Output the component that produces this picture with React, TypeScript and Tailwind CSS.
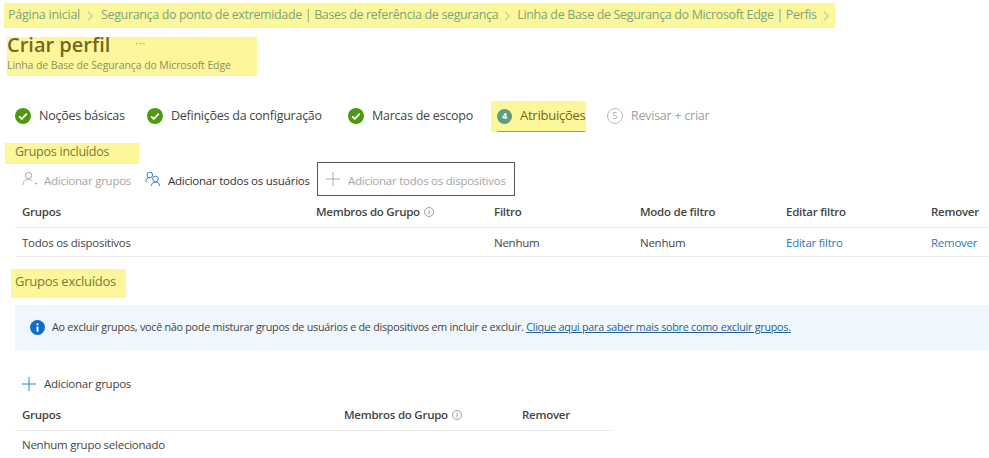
import React from "react";

function Check() {
  return (
    <svg width="16" height="16" viewBox="0 0 16 16" className="shrink-0">
      <circle cx="8" cy="8" r="8" fill="#4d9a12" />
      <path d="M4.2 8.3l2.6 2.6 5-5.2" fill="none" stroke="#fff" strokeWidth="1.8" />
    </svg>
  );
}

function Info({ size = 10 }: { size?: number }) {
  return (
    <svg width={size} height={size} viewBox="0 0 10 10" className="shrink-0">
      <circle cx="5" cy="5" r="4.5" fill="none" stroke="#777" strokeWidth="0.7" />
      <path d="M5 4.2v3.3M5 2.4v1" stroke="#777" strokeWidth="0.8" />
    </svg>
  );
}

function Chevron() {
  return (
    <svg width="7" height="10" viewBox="0 0 7 10" className="shrink-0">
      <path d="M1 .8L5.5 5 1 9.2" fill="none" stroke="#9aa98a" strokeWidth="0.9" />
    </svg>
  );
}

function Plus({ color }: { color: string }) {
  return (
    <svg width="14" height="14" viewBox="0 0 14 14" className="shrink-0">
      <path d="M7 0v14M0 7h14" stroke={color} strokeWidth="1" />
    </svg>
  );
}

function Step({ label, w }: { label: string; w: string }) {
  return (
    <div className={`flex items-center gap-2 ${w}`}>
      <Check />
      <span className="text-[12.5px] text-[#444] whitespace-nowrap">{label}</span>
    </div>
  );
}

export default function App() {
  return (
    <div className="w-[989px] h-[458px] overflow-hidden bg-white font-['Open_Sans','Noto_Sans',sans-serif] tracking-[-0.25px] text-[#333]">
      <div className="pt-[3px] pl-[4px]">
        <div className="flex items-center w-[831px] h-[25px] bg-[#fdf79c] pl-[4px] text-[12.5px] text-[#7aa57c] whitespace-nowrap gap-[6px]">
          <span className="mr-[1px]">Página inicial</span>
          <Chevron />
          <span className="tracking-[-0.36px] ml-[1px]">Segurança do ponto de extremidade | Bases de referência de segurança</span>
          <Chevron />
          <span className="tracking-[-0.35px]">Linha de Base de Segurança do Microsoft Edge | Perfis</span>
          <Chevron />
        </div>
      </div>

      <div className="ml-[7px] mt-[9px] w-[250px] h-[39px] bg-[#fdf79c]">
        <div className="flex items-start">
          <span className="text-[20px] leading-[15px] font-semibold text-[#76681a] tracking-[0px]">Criar perfil</span>
          <span className="ml-[25px] mt-[1px] text-[10px] leading-[10px] text-[#8a8a70] tracking-[1px]">···</span>
        </div>
        <div className="mt-[7px] text-[10.5px] leading-[13px] text-[#8f8f5c] tracking-[-0.1px] whitespace-nowrap">Linha de Base de Segurança do Microsoft Edge</div>
      </div>

      <div className="flex items-center ml-[15px] mt-[24px] h-[32px]">
        <Step label="Noções básicas" w="w-[132px]" />
        <Step label="Definições da configuração" w="w-[201px]" />
        <Step label="Marcas de escopo" w="w-[143px]" />
        <div className="w-[95px] h-[31px] bg-[#fdf79c] flex items-center pl-[6px] gap-[8px] relative">
          <span className="w-[15px] h-[15px] rounded-full bg-[#5d9c7c] text-white text-[9px] font-bold flex items-center justify-center">4</span>
          <span className="text-[13px] text-[#6c6a1c] font-medium whitespace-nowrap">Atribuições</span>
          <span className="absolute left-[6px] bottom-0 w-[88px] h-[1px] bg-[#7ca67a]" />
        </div>
        <div className="flex items-center gap-[8px] ml-[21px]">
          <span className="w-[16px] h-[16px] rounded-full border border-[#bbb] text-[#aaa] text-[9px] flex items-center justify-center">5</span>
          <span className="text-[12.5px] text-[#a0a0a0] whitespace-nowrap">Revisar + criar</span>
        </div>
      </div>

      <div className="ml-[5px] mt-[11px] w-[134px] h-[21px] bg-[#fdf79c] pl-[10px] text-[12.5px] leading-[18px] text-[#7a7a33]">Grupos incluídos</div>

      <div className="flex items-center ml-[22px] h-[34px] -mt-[2px] text-[12px]">
        <div className="flex items-center gap-[6px] w-[123px]">
          <svg width="16" height="16" viewBox="0 0 16 16" className="shrink-0">
            <circle cx="6.5" cy="4.5" r="3.2" fill="none" stroke="#aaa" />
            <path d="M1 14c0-4 2.5-5.5 5.5-5.5 1.5 0 3 .5 4 1.5M13 12.5h2M14 11.5v2" fill="none" stroke="#aaa" />
          </svg>
          <span className="pt-[3px] text-[#a6a6a6] text-[11.5px] whitespace-nowrap">Adicionar grupos</span>
        </div>
        <div className="flex items-center gap-[7px] w-[172px]">
          <svg width="16" height="16" viewBox="0 0 16 16" className="shrink-0">
            <circle cx="4.8" cy="4" r="2.8" fill="none" stroke="#2b80c4" />
            <path d="M.8 11c0-3 1.6-4.4 4-4.4" fill="none" stroke="#2b80c4" />
            <circle cx="10.5" cy="8" r="2.8" fill="none" stroke="#2b80c4" />
            <path d="M6.5 15c0-2.5 1.6-4 4-4s4 1.5 4 4" fill="none" stroke="#2b80c4" />
          </svg>
          <span className="pt-[3px] text-[#333] text-[11.5px] whitespace-nowrap">Adicionar todos os usuários</span>
        </div>
        <div className="flex items-center gap-[8px] w-[198px] h-[34px] border border-[#555] pl-[8px]">
          <Plus color="#aaa" />
          <span className="pt-[3px] text-[#a6a6a6] text-[11.5px] whitespace-nowrap">Adicionar todos os dispositivos</span>
        </div>
      </div>

      <div className="ml-[15px] grid grid-cols-[294px_178px_146px_146px_145px_1fr] pl-[7px] h-[32px] items-center border-b border-[#e8e8e8] text-[11.5px] font-semibold text-[#444]">
        <span>Grupos</span>
        <span className="flex items-center gap-[4px]">Membros do Grupo <Info /></span>
        <span>Filtro</span>
        <span>Modo de filtro</span>
        <span>Editar filtro</span>
        <span>Remover</span>
      </div>
      <div className="ml-[15px] grid grid-cols-[294px_178px_146px_146px_145px_1fr] pl-[7px] pt-[1px] h-[29px] items-center border-b border-[#ececec] text-[11.5px] text-[#444]">
        <span>Todos os dispositivos</span>
        <span />
        <span>Nenhum</span>
        <span>Nenhum</span>
        <span className="text-[#2a78b8]">Editar filtro</span>
        <span className="text-[#2a78b8]">Remover</span>
      </div>

      <div className="ml-[11px] mt-[12px] w-[115px] h-[29px] bg-[#fdf79c] pl-[4px] text-[13px] leading-[24px] text-[#7a7a33]">Grupos excluídos</div>

      <div className="ml-[15px] mt-[7px] h-[45px] bg-[#eff6fc] flex items-center pl-[15px] gap-[7px] text-[10.75px] text-[#444] whitespace-nowrap">
        <svg width="15" height="15" viewBox="0 0 16 16" className="shrink-0">
          <circle cx="8" cy="8" r="8" fill="#0f6cc9" />
          <rect x="7" y="7" width="2" height="5.5" fill="#fff" />
          <rect x="7" y="3.6" width="2" height="2" fill="#fff" />
        </svg>
        <span>
          Ao excluir grupos, você não pode misturar grupos de usuários e de dispositivos em incluir e excluir.{" "}
          <span className="text-[#1f5f96] underline">Clique aqui para saber mais sobre como excluir grupos.</span>
        </span>
      </div>

      <div className="flex items-center ml-[22px] mt-[21px] h-[25px] gap-[8px] text-[11.5px] text-[#444]">
        <Plus color="#2b88d8" />
        <span>Adicionar grupos</span>
      </div>

      <div className="ml-[15px] w-[597px] grid grid-cols-[322px_178px_1fr] pl-[7px] mt-[3px] h-[32px] items-center border-b border-[#e8e8e8] text-[11.5px] font-semibold text-[#444]">
        <span>Grupos</span>
        <span className="flex items-center gap-[4px]">Membros do Grupo <Info /></span>
        <span>Remover</span>
      </div>
      <div className="ml-[22px] h-[28px] flex items-center text-[11.5px] text-[#444]">Nenhum grupo selecionado</div>
    </div>
  );
}
